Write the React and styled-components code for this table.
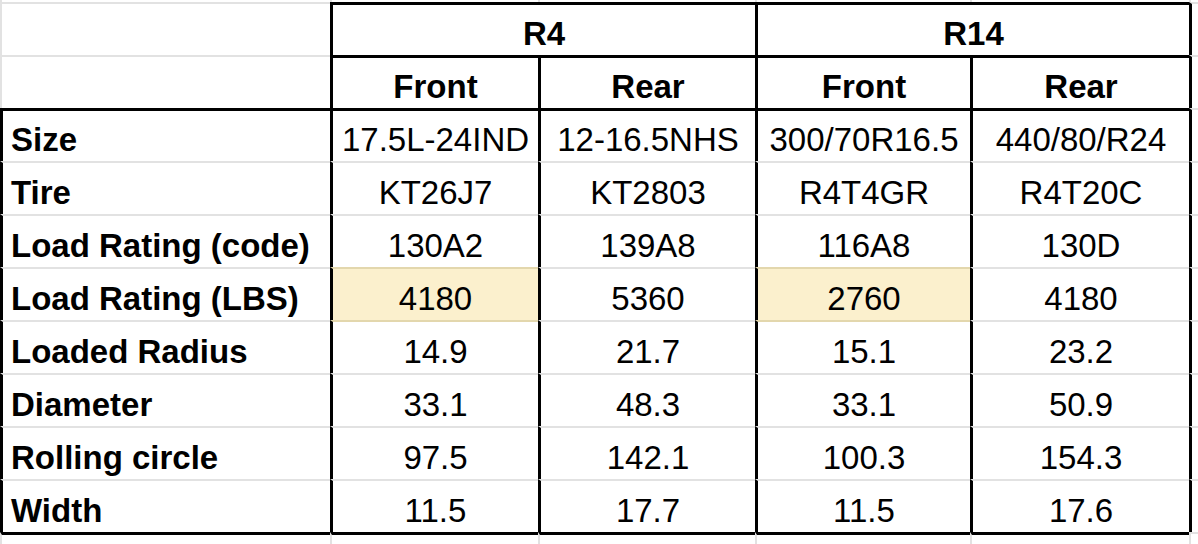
import React from 'react';
import styled, { createGlobalStyle } from 'styled-components';

const GRID = '#e2e2e2';
const INK = '#000';
const TAN = '#e3d7ad';

const GlobalStyle = createGlobalStyle`
  html, body {
    margin: 0;
    background: #fff;
  }
  body {
    font-family: "Liberation Sans", Arial, sans-serif;
    color: #000;
    overflow: hidden;
  }
`;

const lineWidth = (c) => {
  if (!c) return '0';
  return c === INK ? '3px' : '2px';
};

const Sheet = styled.div`
  display: grid;
  grid-template-columns: 330px 208px 217px 215px 219px 9px;
  grid-template-rows: 2px repeat(10, 53px) 12px;
  width: 1198px;
  height: 544px;
  overflow: hidden;
`;

const Cell = styled.div`
  box-sizing: border-box;
  grid-column: ${(p) => (p.$span ? `span ${p.$span}` : 'auto')};
  display: flex;
  align-items: flex-end;
  justify-content: ${(p) => (p.$label ? 'flex-start' : 'center')};
  padding: 0 0 2px ${(p) => (p.$label ? '8px' : '0')};
  border-top: ${(p) => lineWidth(p.$top)} solid ${(p) => p.$top || 'transparent'};
  border-left: ${(p) => lineWidth(p.$left)} solid ${(p) => p.$left || 'transparent'};
  background: ${(p) => p.$fill || 'transparent'};
  font-size: 33px;
  line-height: normal;
  font-weight: ${(p) => (p.$bold ? 700 : 400)};
  white-space: nowrap;
  overflow: hidden;
`;

const groups = ['R4', 'R14'];
const sides = ['Front', 'Rear', 'Front', 'Rear'];

const rows = [
  { label: 'Size', values: ['17.5L-24IND', '12-16.5NHS', '300/70R16.5', '440/80/R24'] },
  { label: 'Tire', values: ['KT26J7', 'KT2803', 'R4T4GR', 'R4T20C'] },
  { label: 'Load Rating (code)', values: ['130A2', '139A8', '116A8', '130D'] },
  { label: 'Load Rating (LBS)', values: ['4180', '5360', '2760', '4180'], marked: [0, 2] },
  { label: 'Loaded Radius', values: ['14.9', '21.7', '15.1', '23.2'] },
  { label: 'Diameter', values: ['33.1', '48.3', '33.1', '50.9'] },
  { label: 'Rolling circle', values: ['97.5', '142.1', '100.3', '154.3'] },
  { label: 'Width', values: ['11.5', '17.7', '11.5', '17.6'] },
];

const FILL = '#fbf0cd';

export default function App() {
  return (
    <>
      <GlobalStyle />
      <Sheet>
        {/* sliver of the row above */}
        {[0, 1, 2, 3, 4, 5].map((i) => (
          <Cell key={`t${i}`} $left={GRID} />
        ))}

        {/* group header */}
        <Cell $top={GRID} $left={GRID} />
        {groups.map((g) => (
          <Cell key={g} $span={2} $top={INK} $left={INK} $bold>
            {g}
          </Cell>
        ))}
        <Cell $top={GRID} $left={INK} />

        {/* side header */}
        <Cell $top={GRID} $left={GRID} />
        {sides.map((s, i) => (
          <Cell key={`s${i}`} $top={INK} $left={INK} $bold>
            {s}
          </Cell>
        ))}
        <Cell $top={GRID} $left={INK} />

        {rows.map((row, r) => {
          const prev = rows[r - 1];
          const lineFor = (c) => {
            if (r === 0) return INK;
            if ((row.marked && row.marked.includes(c)) || (prev && prev.marked && prev.marked.includes(c))) return TAN;
            return GRID;
          };
          return (
            <React.Fragment key={row.label}>
              <Cell $top={r === 0 ? INK : GRID} $left={INK} $label $bold>
                {row.label}
              </Cell>
              {row.values.map((v, c) => (
                <Cell
                  key={`${row.label}${c}`}
                  $top={lineFor(c)}
                  $left={INK}
                  $fill={row.marked && row.marked.includes(c) ? FILL : null}
                >
                  {v}
                </Cell>
              ))}
              <Cell $top={GRID} $left={INK} />
            </React.Fragment>
          );
        })}

        {/* sliver of the row below */}
        {[0, 1, 2, 3, 4].map((i) => (
          <Cell key={`b${i}`} $top={INK} $left={GRID} />
        ))}
        <Cell $top={GRID} $left={GRID} />
      </Sheet>
    </>
  );
}
